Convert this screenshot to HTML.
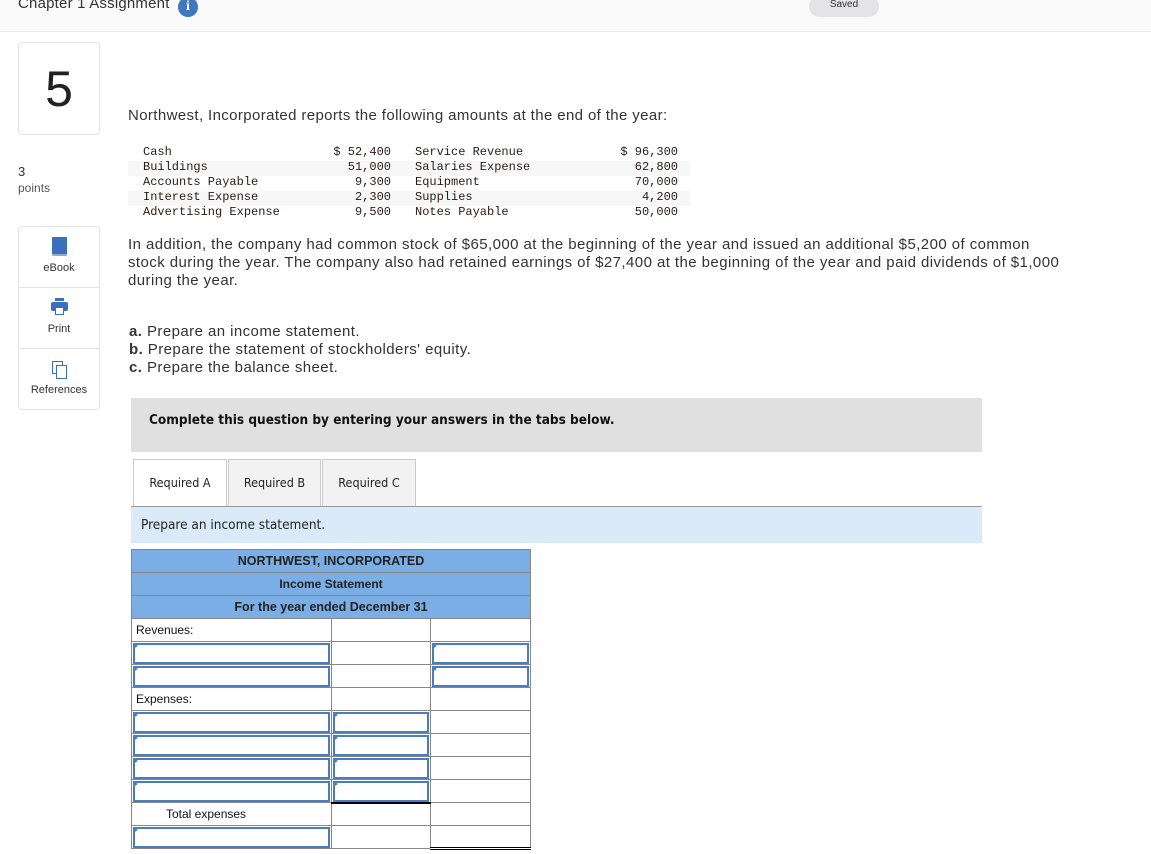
<!DOCTYPE html>
<html><head><meta charset="utf-8"><style>
*{box-sizing:border-box;margin:0;padding:0}
body{width:1151px;height:854px;overflow:hidden;background:#fff;font-family:"Liberation Sans",sans-serif;color:#333;position:relative}
.a{position:absolute}
.top{left:0;top:0;width:1151px;height:32px;background:#fafafa;border-bottom:1px solid #e8e8e8}
.mono{font-family:"Liberation Mono",monospace;font-size:12px;color:#2a1a1a;line-height:15px}
.side{left:18px;width:82px;border:1px solid #e3e3e3;border-radius:4px}
.sb{height:61px;border-bottom:1px solid #e3e3e3;text-align:center;font-size:11px;color:#333;position:relative}
table{border-collapse:collapse;position:absolute;left:131px;top:549px;width:400px}
td{border:1px solid #888;height:23px;padding:0;font-size:12px;color:#111;position:relative}
.h td{background:#7aaee5;text-align:center;font-weight:bold;font-size:12.5px;color:#222}
.in{position:absolute;left:1px;top:1px;right:1px;bottom:0;border:2px solid #4a7dbf}
.in:before{content:"";position:absolute;left:-2px;top:-2px;border-left:5px solid #4a7dbf;border-top:3px solid transparent;border-bottom:3px solid transparent}
.p{font-size:15px;color:#333;line-height:18px;letter-spacing:0.43px}
.tab{top:459px;height:48px;border:1px solid #ccc;font-family:"DejaVu Sans Condensed","Liberation Sans",sans-serif;font-size:12.5px;color:#222;text-align:center;line-height:46px;background:#f2f2f2}
</style></head><body>
<div class="a top"></div>
<div class="a" style="left:18px;top:-5px;font-size:15px;color:#333;letter-spacing:0.2px">Chapter 1 Assignment</div>
<div class="a" style="left:178px;top:-3px;width:20px;height:20px;border-radius:50%;background:#3f78c0;color:#fff;font-weight:bold;font-size:14px;text-align:center;line-height:20px;font-family:'Liberation Serif',serif">i</div>
<div class="a" style="left:809px;top:-4px;width:70px;height:21px;border-radius:11px;background:#e4e4e6;font-size:10px;text-align:center;line-height:17px;color:#333">Saved</div>

<div class="a" style="left:18px;top:42px;width:82px;height:93px;border:1px solid #e3e3e3;border-radius:4px;text-align:center;font-size:50px;line-height:93px;color:#222">5</div>
<div class="a" style="left:18px;top:164px;font-size:13px;color:#333;line-height:16px">3<br><span style="font-size:12px;color:#555">points</span></div>
<div class="a side" style="top:226px;height:184px">
<div class="sb"><div class="a" style="left:33px;top:10px;width:15px;height:19px;background:#3a6fbd;border-radius:1px;border-bottom:2px solid #9ab"></div><div class="a" style="left:0;right:0;top:35px">eBook</div></div>
<div class="sb"><div class="a" style="left:32px;top:14px;width:17px;height:9px;background:#3a6fbd;border-radius:2px"></div><div class="a" style="left:36px;top:10px;width:9px;height:3px;background:#3a6fbd"></div><div class="a" style="left:36px;top:19px;width:9px;height:8px;background:#fff;border:1px solid #3a6fbd"></div><div class="a" style="left:0;right:0;top:35px">Print</div></div>
<div class="sb" style="border:none"><div class="a" style="left:33px;top:12px;width:11px;height:13px;border:1px solid #3a6fbd;background:#fff"></div><div class="a" style="left:37px;top:16px;width:11px;height:14px;border:1.5px solid #3a6fbd;background:#fff"></div><div class="a" style="left:0;right:0;top:35px">References</div></div>
</div>

<div class="a p" style="left:128px;top:107px;letter-spacing:0.38px">Northwest, Incorporated reports the following amounts at the end of the year:</div>
<div class="a" style="left:128px;top:161px;width:562px;height:15px;background:#f7f7f7"></div>
<div class="a" style="left:128px;top:191px;width:562px;height:15px;background:#f7f7f7"></div>
<div class="a mono" style="left:143px;top:145px">Cash<br>Buildings<br>Accounts Payable<br>Interest Expense<br>Advertising Expense</div>
<div class="a mono" style="left:290px;width:101px;text-align:right;top:145px">$ 52,400<br>51,000<br>9,300<br>2,300<br>9,500</div>
<div class="a mono" style="left:415px;top:145px">Service Revenue<br>Salaries Expense<br>Equipment<br>Supplies<br>Notes Payable</div>
<div class="a mono" style="left:570px;width:108px;text-align:right;top:145px">$ 96,300<br>62,800<br>70,000<br>4,200<br>50,000</div>

<div class="a p" style="left:128px;top:236px;width:1000px;white-space:nowrap">In addition, the company had common stock of $65,000 at the beginning of the year and issued an additional $5,200 of common<br>stock during the year. The company also had retained earnings of $27,400 at the beginning of the year and paid dividends of $1,000<br>during the year.</div>
<div class="a p" style="left:129px;top:323px"><b>a.</b> Prepare an income statement.<br><b>b.</b> Prepare the statement of stockholders' equity.<br><b>c.</b> Prepare the balance sheet.</div>

<div class="a" style="left:131px;top:398px;width:851px;height:54px;background:#e0e0e0"></div>
<div class="a" style="left:149px;top:412px;font-family:'DejaVu Sans Condensed','Liberation Sans',sans-serif;font-weight:bold;font-size:13.5px;color:#111">Complete this question by entering your answers in the tabs below.</div>
<div class="a tab" style="left:133px;width:94px;background:#fff;border-bottom:none;height:48px">Required A</div>
<div class="a tab" style="left:228px;width:93px">Required B</div>
<div class="a tab" style="left:322px;width:94px">Required C</div>
<div class="a" style="left:131px;top:506px;width:851px;height:37px;background:#daeaf8;border-top:1px solid #999"></div>
<div class="a" style="left:141px;top:517px;font-family:'DejaVu Sans Condensed','Liberation Sans',sans-serif;font-size:13.5px;color:#222">Prepare an income statement.</div>

<table>
<colgroup><col style="width:200px"><col style="width:100px"><col style="width:100px"></colgroup>
<tr class="h"><td colspan="3">NORTHWEST, INCORPORATED</td></tr>
<tr class="h"><td colspan="3" style="font-size:12px">Income Statement</td></tr>
<tr class="h"><td colspan="3">For the year ended December 31</td></tr>
<tr><td style="padding-left:4px">Revenues:</td><td></td><td></td></tr>
<tr><td><div class="in"></div></td><td></td><td><div class="in"></div></td></tr>
<tr><td><div class="in"></div></td><td></td><td><div class="in"></div></td></tr>
<tr><td style="padding-left:4px">Expenses:</td><td></td><td></td></tr>
<tr><td><div class="in"></div></td><td><div class="in"></div></td><td></td></tr>
<tr><td><div class="in"></div></td><td><div class="in"></div></td><td></td></tr>
<tr><td><div class="in"></div></td><td><div class="in"></div></td><td></td></tr>
<tr><td><div class="in"></div></td><td><div class="in"></div></td><td></td></tr>
<tr><td style="padding-left:34px">Total expenses</td><td style="border-top:2px solid #000"></td><td></td></tr>
<tr><td><div class="in"></div></td><td></td><td style="border-top:1px solid #000;border-bottom:3px double #000"></td></tr>
</table>
</body></html>
